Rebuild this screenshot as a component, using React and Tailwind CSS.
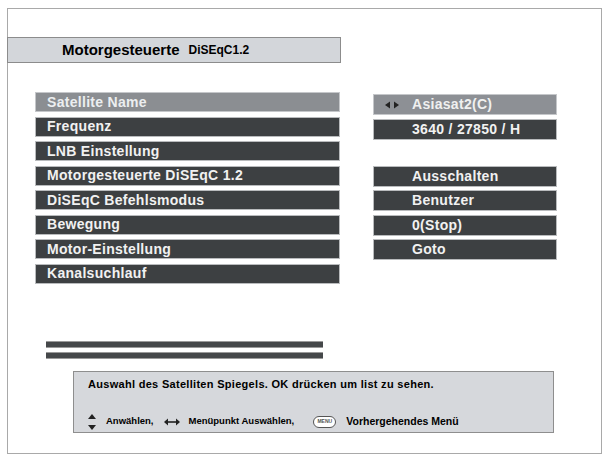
const menu = [
  'Satellite Name',
  'Frequenz',
  'LNB Einstellung',
  'Motorgesteuerte DiSEqC 1.2',
  'DiSEqC Befehlsmodus',
  'Bewegung',
  'Motor-Einstellung',
  'Kanalsuchlauf',
];

const values = ['Asiasat2(C)', '3640 / 27850 / H', null, 'Ausschalten', 'Benutzer', '0(Stop)', 'Goto', null];

function LeftRight() {
  return (
    <svg width="14" height="8" viewBox="0 0 14 8" className="absolute left-[11px] top-[6px]">
      <path d="M0 4 L5 0.5 L5 7.5 Z" fill="#222" />
      <path d="M14 4 L9 0.5 L9 7.5 Z" fill="#222" />
    </svg>
  );
}

function UpDown() {
  return (
    <svg width="8" height="16" viewBox="0 0 8 16">
      <path d="M4 0 L8 5 L0 5 Z" fill="#222" />
      <path d="M4 16 L8 11 L0 11 Z" fill="#222" />
    </svg>
  );
}

function Arrows() {
  return (
    <svg width="16" height="8" viewBox="0 0 16 8">
      <path d="M0 4 L4 0.5 L4 7.5 Z" fill="#222" />
      <path d="M16 4 L12 0.5 L12 7.5 Z" fill="#222" />
      <rect x="3" y="3.2" width="10" height="1.6" fill="#222" />
    </svg>
  );
}

export default function App() {
  return (
    <div className="w-[606px] h-[457px] bg-white pl-[7px] pt-[8px]" style={{ fontFamily: '"Liberation Sans", Arial, sans-serif' }}>
      <div className="w-[595px] h-[446px] border border-[#a9a9a9] bg-white relative">
        <div className="mt-[28px] -ml-px w-[334px] h-[26px] bg-[#d3d6da] border border-[#8c8c8c] flex items-center pl-[54px] gap-[9px] text-black font-bold">
          <span className="text-[15px]">Motorgesteuerte</span>
          <span className="text-[12px]">DiSEqC1.2</span>
        </div>

        <div className="mt-[29px] ml-[27px] grid grid-cols-[305px_184px] gap-x-[33px] gap-y-[4.5px] auto-rows-[20px]">
          {menu.map((m, i) => (
            <div key={m} className="contents">
              <div
                className={`flex items-center pl-[11px] font-bold text-[14px] tracking-[0.3px] border ${
                  i === 0 ? 'bg-[#8b8e92] text-[#eceef0] border-[#c5c7ca]' : 'bg-[#3d4042] text-[#f1f1f1] border-[#b9bbbd]'
                }`}
              >
                {m}
              </div>
              {values[i] ? (
                <div
                  className={`relative h-[21px] flex items-center pl-[38px] font-bold text-[14px] tracking-[0.3px] border ${
                    i === 0 ? 'bg-[#8d9095] text-[#f0f0f0] border-[#c5c7ca] mt-[2px]' : 'bg-[#3d4042] text-[#f1f1f1] border-[#b9bbbd]'
                  } ${i === 1 ? 'mt-[2px]' : ''}`}
                >
                  {i === 0 && <LeftRight />}
                  {values[i]}
                </div>
              ) : (
                <div />
              )}
            </div>
          ))}
        </div>

        <div className="mt-[57px] ml-[38px] w-[277px] flex flex-col gap-[4px]">
          <div className="h-[7px] bg-[#45484a] border-y border-[#9a9a9a]" />
          <div className="h-[7px] bg-[#45484a] border-y border-[#9a9a9a]" />
        </div>

        <div className="mt-[12px] ml-[65px] w-[481px] h-[62px] bg-[#d6d8dc] border border-[#8e8e8e] pl-[14px] pt-[6px] text-black font-bold">
          <div className="h-[14px] flex items-center text-[11px] tracking-[0.3px]">Auswahl des Satelliten Spiegels. OK drücken um list zu sehen.</div>
          <div className="mt-[21px] h-[18px] flex items-center text-[9.5px]">
            <UpDown />
            <span className="ml-[10px]">Anwählen,</span>
            <span className="ml-[10px]"><Arrows /></span>
            <span className="ml-[9px]">Menüpunkt Auswählen,</span>
            <span className="ml-[19px] w-[23px] h-[12px] rounded-full bg-white border border-[#555] flex items-center justify-center text-[5px] text-[#555]">MENU</span>
            <span className="ml-[10px] text-[10.5px]">Vorhergehendes Menü</span>
          </div>
        </div>
      </div>
    </div>
  );
}
